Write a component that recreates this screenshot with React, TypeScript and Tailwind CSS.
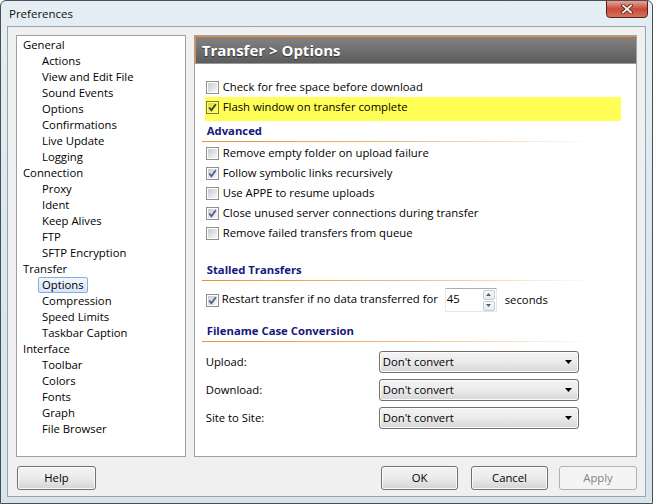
import React from "react";

const TREE: { label: string; child?: boolean; selected?: boolean }[] = [
  { label: "General" },
  { label: "Actions", child: true },
  { label: "View and Edit File", child: true },
  { label: "Sound Events", child: true },
  { label: "Options", child: true },
  { label: "Confirmations", child: true },
  { label: "Live Update", child: true },
  { label: "Logging", child: true },
  { label: "Connection" },
  { label: "Proxy", child: true },
  { label: "Ident", child: true },
  { label: "Keep Alives", child: true },
  { label: "FTP", child: true },
  { label: "SFTP Encryption", child: true },
  { label: "Transfer" },
  { label: "Options", child: true, selected: true },
  { label: "Compression", child: true },
  { label: "Speed Limits", child: true },
  { label: "Taskbar Caption", child: true },
  { label: "Interface" },
  { label: "Toolbar", child: true },
  { label: "Colors", child: true },
  { label: "Fonts", child: true },
  { label: "Graph", child: true },
  { label: "File Browser", child: true },
];

const ADVANCED = [
  { label: "Remove empty folder on upload failure", checked: false },
  { label: "Follow symbolic links recursively", checked: true },
  { label: "Use APPE to resume uploads", checked: false },
  { label: "Close unused server connections during transfer", checked: true },
  { label: "Remove failed transfers from queue", checked: false },
];

function Box({ checked, yellow }: { checked?: boolean; yellow?: boolean }) {
  return (
    <span
      className={
        yellow
          ? "relative flex h-[13px] w-[13px] shrink-0 items-center justify-center border border-[#7d7d3a] bg-[#ffff66]"
          : "relative flex h-[13px] w-[13px] shrink-0 items-center justify-center border border-[#8e8f8f] bg-white"
      }
    >
      <span
        className={
          yellow
            ? "h-[9px] w-[9px] bg-gradient-to-br from-[#d8d84a] to-[#ffff70]"
            : "h-[9px] w-[9px] bg-gradient-to-br from-[#cbcbcb] to-[#f7f7f7]"
        }
      />
      {checked && (
        <svg className="absolute left-[1px] top-[1px]" width="9" height="9" viewBox="0 0 9 9">
          <path
            d="M1.3 4.4 L3.4 7.2 L7.8 1.2"
            fill="none"
            stroke={yellow ? "#3a3a1a" : "#4b5d8f"}
            strokeWidth="1.7"
          />
        </svg>
      )}
    </span>
  );
}

function Section({ title, mt }: { title: string; mt: string }) {
  return (
    <div className={mt}>
      <div className="h-[16px] pl-[12px] text-[11.3px] font-bold leading-[16px] text-[#16167e]">{title}</div>
      <div className="ml-[7px] mt-[2px] h-[1px] w-[396px] bg-gradient-to-r from-[#ef8f32] via-[#f3b77c] to-transparent" />
    </div>
  );
}

function Select() {
  return (
    <div className="flex h-[22px] w-[200px] items-center justify-between rounded-[3px] border border-[#707070] bg-gradient-to-b from-[#f3f3f3] via-[#ebebeb] to-[#d6d6d6] pl-[3px] pr-[6px] shadow-[inset_0_0_0_1px_#fcfcfc]">
      <span>Don't convert</span>
      <svg width="7" height="4" viewBox="0 0 7 4">
        <path d="M0 0 H7 L3.5 4 Z" fill="#000" />
      </svg>
    </div>
  );
}

function Button({ label, disabled, w }: { label: string; disabled?: boolean; w: string }) {
  return (
    <div
      className={
        disabled
          ? `flex h-[24px] ${w} items-center justify-center rounded-[3px] border border-[#adb2b5] bg-[#f4f4f4] text-[#838383]`
          : `flex h-[24px] ${w} items-center justify-center rounded-[3px] border border-[#707070] bg-gradient-to-b from-[#f2f2f2] via-[#ebebeb] to-[#d4d4d4] shadow-[inset_0_0_0_1px_#fbfbfb]`
      }
    >
      {label}
    </div>
  );
}

export default function App() {
  return (
    <div
      className="relative h-[504px] w-[653px] overflow-hidden rounded-t-[6px] border border-[#4a4f55] bg-gradient-to-b from-[#e4eef4] via-[#dbe7ef] to-[#d7e4ec] text-[11.3px] text-black"
      style={{ fontFamily: '"Open Sans", "Noto Sans", sans-serif' }}
    >
      {/* title bar */}
      <div className="flex h-[25px] items-center pl-[8px] text-[11.5px] text-[#101010]">Preferences</div>
      <div className="absolute right-[4px] top-[-1px] flex h-[18px] w-[42px] items-center justify-center rounded-b-[4px] border border-[#5c1f18] bg-gradient-to-b from-[#e3a496] via-[#c9493b] to-[#d7705a]">
        <svg width="12" height="10" viewBox="0 0 12 10">
          <path d="M2 1.5 L10 8.5 M10 1.5 L2 8.5" stroke="#5a2620" strokeWidth="3.6" strokeLinecap="square" />
          <path d="M2 1.5 L10 8.5 M10 1.5 L2 8.5" stroke="#f4f4f4" strokeWidth="1.8" strokeLinecap="square" />
        </svg>
      </div>

      {/* client area */}
      <div className="mx-[6px] flex h-[471px] flex-col border border-[#97a3ad] bg-[#f0f0f0] px-[8px] pt-[8px]">
        <div className="flex h-[422px] gap-[8px]">
          {/* tree */}
          <div className="w-[170px] border border-[#a0a0a0] bg-white pt-[1px]">
            {TREE.map((t, i) => (
              <div key={i} className={t.child ? "flex h-[16px] items-center pl-[21px]" : "flex h-[16px] items-center pl-[6px]"}>
                {t.selected ? (
                  <span className="flex h-[16px] items-center rounded-[2px] border border-[#84acdd] bg-gradient-to-b from-[#f1f7fe] to-[#d5e6fa] px-[3px]">
                    {t.label}
                  </span>
                ) : (
                  <span className={t.child ? "pl-[4px]" : ""}>{t.label}</span>
                )}
              </div>
            ))}
          </div>

          {/* right panel */}
          <div className="flex w-[444px] flex-col border border-[#a0a0a0] bg-white">
            <div className="flex h-[28px] items-center border-l border-t border-b border-[#ee8a2e] border-b-[#9a9a9a] bg-gradient-to-b from-[#838383] to-[#5c5c5c] pl-[6px] text-[15px] font-bold text-white [text-shadow:0_1px_1px_#333]">
              Transfer &gt; Options
            </div>

            <div className="flex flex-col pl-[10px]">
              <div className="mt-[13px] flex h-[20px] items-center gap-[4px] pl-[1px]">
                <Box />
                <span>Check for free space before download</span>
              </div>
              <div className="flex h-[24px] w-[416px] items-center gap-[4px] bg-[#ffff55] pb-[3px] pl-[1px]">
                <Box checked yellow />
                <span>Flash window on transfer complete</span>
              </div>
            </div>

            <Section title="Advanced" mt="mt-[2px]" />
            <div className="mt-[1px] flex flex-col pl-[11px]">
              {ADVANCED.map((r) => (
                <div key={r.label} className="flex h-[20px] items-center gap-[4px]">
                  <Box checked={r.checked} />
                  <span>{r.label}</span>
                </div>
              ))}
            </div>

            <Section title="Stalled Transfers" mt="mt-[19px]" />
            <div className="mt-[7px] flex h-[24px] items-center pl-[11px]">
              <Box checked />
              <span className="ml-[3px] w-[223px] pb-[2px]">Restart transfer if no data transferred for</span>
              <div className="flex h-[24px] w-[52px] items-center justify-between border border-[#e3e9ef] border-t-[#abadb3] bg-white pl-[1px] pr-[1px]">
                <span className="pb-[2px]">45</span>
                <div className="flex flex-col gap-[1px]">
                  <div className="flex h-[10px] w-[12px] items-center justify-center rounded-[2px] border border-[#c5cbd3] bg-gradient-to-b from-[#fafafa] to-[#e6e9ee]">
                    <svg width="5" height="3" viewBox="0 0 5 3">
                      <path d="M0 3 L2.5 0 L5 3 Z" fill="#4d6185" />
                    </svg>
                  </div>
                  <div className="flex h-[10px] w-[12px] items-center justify-center rounded-[2px] border border-[#c5cbd3] bg-gradient-to-b from-[#fafafa] to-[#e6e9ee]">
                    <svg width="5" height="3" viewBox="0 0 5 3">
                      <path d="M0 0 L5 0 L2.5 3 Z" fill="#4d6185" />
                    </svg>
                  </div>
                </div>
              </div>
              <span className="ml-[8px]">seconds</span>
            </div>

            <Section title="Filename Case Conversion" mt="mt-[11px]" />
            <div className="mt-[9px] flex flex-col gap-[6px] pl-[11px]">
              {["Upload:", "Download:", "Site to Site:"].map((l) => (
                <div key={l} className="flex items-center">
                  <span className="w-[173px]">{l}</span>
                  <Select />
                </div>
              ))}
            </div>
          </div>
        </div>

        {/* buttons */}
        <div className="mt-[9px] flex items-center">
          <div className="ml-[1px]">
            <Button label="Help" w="w-[79px]" />
          </div>
          <div className="ml-auto flex">
            <Button label="OK" w="w-[77px]" />
            <div className="ml-[13px]">
              <Button label="Cancel" w="w-[77px]" />
            </div>
            <div className="ml-[11px]">
              <Button label="Apply" w="w-[78px]" disabled />
            </div>
          </div>
        </div>
      </div>
    </div>
  );
}
